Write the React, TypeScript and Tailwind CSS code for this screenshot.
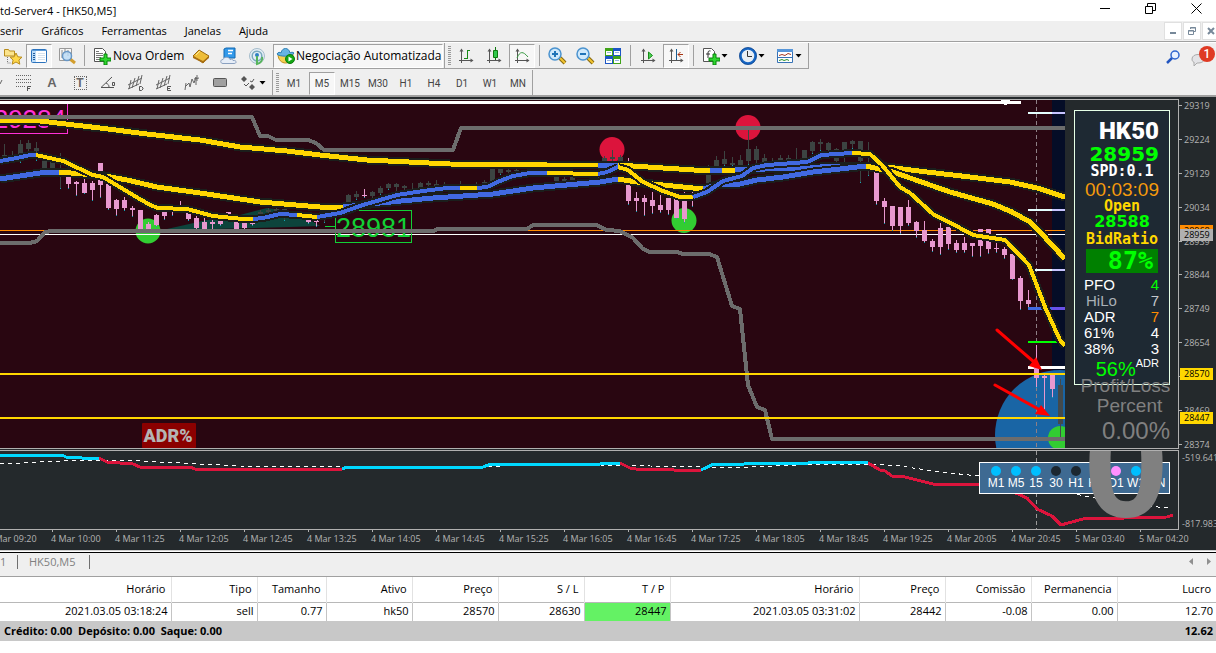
import * as React from "react";

type Candle = [x: number, high: number, low: number, top: number, bottom: number];

type Segment = { color: string; points: string };

const GOLD = "#ffd700";
const BLUE = "#4169e1";
const CYAN = "#00d8ff";
const RED = "#dc143c";

const darkCandles: Candle[] = [
  [4, 144, 157, 155, 157], [12, 151, 157, 155, 156], [20, 140, 162, 144, 155],
  [28, 140, 152, 143, 149], [36, 142, 160, 148, 152], [44, 159, 168, 159, 168],
  [52, 161, 168, 161, 168], [60, 153, 188, 160, 163], [260, 210, 217, 212, 215],
  [268, 208, 213, 210, 212], [276, 208, 213, 209, 211], [284, 208, 220, 209, 212],
  [324, 212, 222, 212, 214], [348, 194, 203, 195, 203], [356, 191, 199, 194, 197],
  [372, 191, 198, 192, 196], [380, 186, 194, 188, 193], [388, 183, 189, 184, 188],
  [396, 183, 192, 184, 187], [404, 185, 191, 186, 188], [412, 183, 192, 190, 191],
  [420, 182, 189, 183, 188], [428, 181, 187, 183, 185], [436, 180, 187, 184, 186],
  [444, 182, 187, 185, 186], [460, 181, 186, 185, 186], [476, 182, 186, 185, 186],
  [484, 180, 185, 182, 184], [492, 169, 182, 169, 182], [500, 169, 174, 169, 173],
  [508, 169, 173, 170, 172], [516, 169, 173, 170, 171], [532, 169, 171, 169, 171],
  [556, 176, 181, 176, 181], [564, 177, 181, 179, 181], [572, 177, 180, 177, 180],
  [596, 177, 179, 177, 179], [604, 156, 161, 158, 161], [612, 150, 161, 157, 159],
  [620, 155, 162, 157, 161], [708, 165, 183, 173, 183], [716, 156, 166, 160, 166],
  [724, 151, 165, 159, 164], [732, 157, 165, 163, 165], [740, 155, 165, 160, 165],
  [748, 130, 164, 149, 161], [756, 146, 164, 149, 160], [764, 154, 163, 158, 162],
  [772, 158, 163, 161, 162], [780, 155, 162, 158, 161], [788, 155, 161, 158, 161],
  [796, 148, 161, 159, 160], [804, 150, 160, 150, 160], [812, 141, 153, 142, 151],
  [820, 139, 150, 142, 144], [828, 142, 153, 143, 150], [836, 148, 163, 149, 161],
  [844, 142, 162, 142, 151], [852, 140, 148, 141, 144], [860, 141, 182, 141, 161],
  [868, 142, 175, 152, 153],
];

const pinkCandles: Candle[] = [
  [68, 166, 188, 177, 184], [76, 181, 195, 182, 184], [84, 178, 193, 183, 193],
  [92, 181, 200, 183, 190], [100, 163, 197, 163, 185], [108, 181, 209, 181, 208],
  [116, 199, 215, 200, 209], [124, 197, 210, 200, 208], [132, 206, 216, 208, 210],
  [140, 210, 229, 210, 229], [148, 222, 229, 224, 229], [156, 214, 226, 215, 225],
  [164, 210, 219, 211, 216], [172, 210, 215, 211, 212], [180, 201, 212, 210, 211],
  [188, 212, 220, 213, 219], [196, 215, 229, 218, 228], [204, 217, 229, 222, 229],
  [212, 219, 229, 222, 224], [220, 213, 225, 219, 224], [228, 212, 216, 212, 215],
  [236, 221, 229, 221, 229], [244, 222, 229, 223, 228], [252, 215, 225, 222, 224],
  [308, 219, 223, 220, 222], [316, 217, 226, 220, 222], [364, 189, 197, 195, 196],
  [628, 158, 204, 184, 201], [636, 192, 211, 198, 201], [644, 195, 215, 198, 202],
  [652, 192, 213, 200, 206], [660, 195, 212, 205, 210], [668, 198, 214, 198, 210],
  [676, 198, 218, 198, 218], [684, 192, 222, 200, 219], [692, 183, 206, 193, 194],
  [876, 172, 204, 172, 201], [884, 198, 223, 201, 207], [892, 206, 230, 206, 226],
  [900, 207, 233, 207, 226], [908, 200, 225, 207, 223], [916, 221, 237, 222, 231],
  [924, 221, 242, 230, 241], [932, 239, 251, 241, 247], [940, 223, 254, 228, 247],
  [948, 226, 249, 227, 244], [956, 240, 252, 243, 250], [964, 237, 252, 243, 250],
  [972, 243, 256, 243, 246], [980, 229, 256, 229, 246], [988, 229, 253, 229, 249],
  [996, 242, 252, 248, 249], [1004, 247, 258, 249, 255], [1012, 254, 279, 254, 279],
  [1020, 276, 309, 278, 301], [1028, 290, 307, 300, 304], [1036, 345, 387, 367, 378],
  [1044, 374, 409, 376, 378], [1052, 374, 397, 374, 389],
];

const slowAverage: Segment[] = [
  { color: GOLD, points: "0,120 40,121 100,128 147,134 200,140 240,147 287,151 320,155 367,160 450,164 547,165 598,165" },
  { color: BLUE, points: "598,165 618,165" },
  { color: GOLD, points: "618,165 663,168 710,171" },
  { color: BLUE, points: "710,171 722,170" },
  { color: GOLD, points: "722,170 735,170" },
  { color: BLUE, points: "735,170 765,169 810,168 830,166 866,166" },
  { color: GOLD, points: "866,166 887,167 927,172 970,177 1010,182 1037,188 1065,197" },
];

const midAverage: Segment[] = [
  { color: BLUE, points: "0,179 40,173 59,172" },
  { color: GOLD, points: "59,172 83,174 105,176 127,180 157,187 200,193 260,202 320,207 343,207" },
  { color: BLUE, points: "343,207 380,203 433,198 493,194 533,188 600,182 618,179" },
  { color: GOLD, points: "618,179 643,183 703,189" },
  { color: BLUE, points: "703,189 720,184 740,184 757,180 783,177 813,172 840,169 866,166" },
  { color: GOLD, points: "866,166 893,172 950,192 993,204 1012,212 1030,222 1040,232 1065,259" },
];

const fastAverage: Segment[] = [
  { color: BLUE, points: "0,161 17,158 30,155 36,155" },
  { color: GOLD, points: "36,155 63,161 93,175 103,177 133,195 150,205 158,208 187,209 213,216 243,219 253,219" },
  { color: BLUE, points: "253,219 263,218 280,214 297,215" },
  { color: GOLD, points: "297,215 317,217" },
  { color: BLUE, points: "317,217 340,213 363,205 397,195 423,191 447,188 460,188" },
  { color: GOLD, points: "460,188 477,188" },
  { color: BLUE, points: "477,188 487,187 500,181 513,176 530,173 547,173" },
  { color: GOLD, points: "547,173 598,174" },
  { color: BLUE, points: "598,174 607,172 618,167" },
  { color: GOLD, points: "618,167 628,170 643,182 663,191 680,197 693,197" },
  { color: BLUE, points: "693,197 707,192 723,181 742,176 753,168 767,165 807,162 822,155 852,153" },
  { color: GOLD, points: "852,153 870,154 882,165 900,187 910,193 933,214 960,228 973,235 1005,240 1029,265 1045,307 1060,340 1065,346" },
];

const oscillator: Segment[] = [
  { color: CYAN, points: "0,455 62,455 66,457 80,457 82,458 99,458" },
  { color: RED, points: "99,458 107,462 120,463 133,464 140,467 190,467 195,469 342,469" },
  { color: CYAN, points: "342,469 347,467 483,467 491,464 600,464 602,463 620,463" },
  { color: RED, points: "620,463 630,468 636,469 672,469 674,470 701,470" },
  { color: CYAN, points: "701,470 714,464 744,464 746,463 808,463 810,462 857,462 868,463" },
  { color: RED, points: "868,463 880,470 885,471 892,476 905,477 933,484 979,484 1010,491 1018,494 1027,498 1037,509 1052,516 1061,525 1083,519 1167,517 1173,515" },
];

const prices = ["29319", "29224", "29129", "29034", "28939", "28844", "28749", "28654", "28559", "28469", "28374"];

const times = [
  "4 Mar 09:20", "4 Mar 10:00", "4 Mar 11:25", "4 Mar 12:05", "4 Mar 12:45", "4 Mar 13:25", "4 Mar 14:05",
  "4 Mar 14:45", "4 Mar 15:25", "4 Mar 16:05", "4 Mar 16:45", "4 Mar 17:25", "4 Mar 18:05", "4 Mar 18:45",
  "4 Mar 19:25", "4 Mar 20:05", "4 Mar 20:45", "5 Mar 03:40", "5 Mar 04:20",
];

const trends = [
  { label: "M1", dot: "bg-[#00bfff]" },
  { label: "M5", dot: "bg-[#00bfff]" },
  { label: "15", dot: "bg-[#00bfff]" },
  { label: "30", dot: "bg-[#1c2730]" },
  { label: "H1", dot: "bg-[#1c2730]" },
  { label: "H4", dot: "bg-[#ff90ff]" },
  { label: "D1", dot: "bg-[#ff90ff]" },
  { label: "W1", dot: "bg-[#00bfff]" },
  { label: "MN", dot: "bg-[#00bfff]" },
];

const columns = [
  { title: "Horário", value: "2021.03.05 03:18:24", width: 171 },
  { title: "Tipo", value: "sell", width: 86 },
  { title: "Tamanho", value: "0.77", width: 69 },
  { title: "Ativo", value: "hk50", width: 86 },
  { title: "Preço", value: "28570", width: 86 },
  { title: "S / L", value: "28630", width: 86 },
  { title: "T / P", value: "28447", width: 86, hit: true },
  { title: "Horário", value: "2021.03.05 03:31:02", width: 189 },
  { title: "Preço", value: "28442", width: 86 },
  { title: "Comissão", value: "-0.08", width: 86 },
  { title: "Permanencia", value: "0.00", width: 86 },
  { title: "Lucro", value: "12.70", width: 99 },
];

function Icon({ size = 20, children }: { size?: number; children: React.ReactNode }) {
  return (
    <svg width={size} height={size} viewBox={`0 0 ${size} ${size}`} className="shrink-0" aria-hidden="true" fill="none">
      {children}
    </svg>
  );
}

function ToolButton({ label, pressed, children }: { label: string; pressed?: boolean; children: React.ReactNode }) {
  return (
    <button
      type="button"
      aria-label={label}
      className={
        pressed
          ? "flex h-[24px] w-[26px] mx-px shrink-0 items-center justify-center border border-[#a0a0a0] border-r-white border-b-white bg-[#f7f7f7]"
          : "flex h-[24px] w-7 shrink-0 items-center justify-center"
      }
    >
      {children}
    </button>
  );
}

function DropButton({ label, children }: { label: string; children: React.ReactNode }) {
  return (
    <button type="button" aria-label={label} className="flex h-[24px] w-[37px] shrink-0 items-center gap-px pl-[5px]">
      {children}
      <Caret />
    </button>
  );
}

function Caret() {
  return (
    <svg width="7" height="4" viewBox="0 0 7 4" className="shrink-0" aria-hidden="true">
      <path d="M.5 0h6L3.500 3.500z" fill="#000" />
    </svg>
  );
}

function Separator() {
  return <div className="mx-[3px] h-[21px] w-px shrink-0 bg-[#a0a0a0]" />;
}

function Grip() {
  return (
    <svg width="3" height="20" className="ml-[3px] mr-px shrink-0" aria-hidden="true">
      {[0, 2, 4, 6, 8, 10, 12, 14, 16, 18].map((y) => (
        <rect key={y} x="0" y={y} width="3" height="1" fill="#9a9a9a" />
      ))}
    </svg>
  );
}

// x/y axes shared by the chart type buttons
function Axes() {
  return (
    <>
      <path d="M5.500 4v13M3 14.500h13" stroke="#555" />
      <path d="M5.500 2.500l2 3h-4zM17.500 14.500l-3-2v4z" fill="#555" />
    </>
  );
}

function Magnifier({ plus }: { plus: boolean }) {
  return (
    <Icon>
      <path d="M13 12l5 5" stroke="#8a6a10" strokeWidth="4" />
      <path d="M13 12l5 5" stroke="#f2c531" strokeWidth="2" />
      <circle cx="8" cy="8" r="6" fill="#cfe9fb" stroke="#4b93cf" strokeWidth="1.500" />
      <path d={plus ? "M5 8h6M8 5v6" : "M5 8h6"} stroke="#1f74b8" strokeWidth="2" />
    </Icon>
  );
}

function NewDocument({ symbol }: { symbol?: boolean }) {
  return (
    <Icon size={18}>
      <path d="M1.500 1.500h8l3 3v10h-11z" fill="#fff" stroke="#555" />
      {symbol ? (
        <path d="M8.500 4c-2-.5-2.500.5-2.500 2v5M4 7h4" stroke="#333" />
      ) : (
        <path d="M3 4.500h3M3 6.500h7M3 8.500h7M3 10.500h5M3 12.500h4" stroke="#777" />
      )}
      <path d="M11 7h3v4h4v3h-4v4h-3v-4H7v-3h4z" fill="#2fd62f" stroke="#07830b" />
    </Icon>
  );
}

function Pitchfork({ mark }: { mark?: string }) {
  return (
    <Icon>
      <path d="M2 12L16 5M2 16l11-5M5 7L3 16M9 5L6 15M13 3l-3 10M16 2l-2 9" stroke="#666" />
      {mark === "D" && <path d="M13.500 13.500h2l1.500 1.500v1l-1.500 1.500h-2z" stroke="#555" />}
      {mark === "E" && <path d="M17 13.500h-3.500v4H17M13.500 15.500H16" stroke="#555" />}
    </Icon>
  );
}

function TitleBar() {
  return (
    <header className="flex h-[21px] items-center justify-between bg-white">
      <h1 className="text-[11px] leading-[20px]">td-Server4 - [HK50,M5]</h1>
      <div className="flex h-full items-start pt-[3px]">
        <button type="button" aria-label="Minimizar" className="flex w-[46px] justify-center">
          <svg width="11" height="11"><path d="M0 5.500h10" stroke="#000" /></svg>
        </button>
        <button type="button" aria-label="Restaurar" className="flex w-[45px] justify-center">
          <svg width="11" height="11" fill="none" stroke="#000">
            <path d="M.5 3.500h7v7h-7zM2.500 3V.5h8v7H8" />
          </svg>
        </button>
        <button type="button" aria-label="Fechar" className="flex w-[43px] justify-center pl-1">
          <svg width="11" height="11"><path d="M.5.5l10 10M10.500.5l-10 10" stroke="#000" /></svg>
        </button>
      </div>
    </header>
  );
}

function MenuBar() {
  const box = "flex h-[18px] w-[18px] shrink-0 items-center justify-center border border-[#e0e0e0] bg-white";
  return (
    <nav className="flex h-[21px] items-center justify-between overflow-hidden border-b border-[#a0a0a0]">
      <div className="flex gap-[18px] text-[11px] leading-[20px]">
        {["serir", "Gráficos", "Ferramentas", "Janelas", "Ajuda"].map((item) => (
          <button key={item} type="button">{item}</button>
        ))}
      </div>
      <div className="-mr-[4px] flex gap-px">
        <button type="button" aria-label="Minimizar gráfico" className={box}>
          <svg width="10" height="10"><path d="M2 7h6" stroke="#778899" strokeWidth="2" /></svg>
        </button>
        <button type="button" aria-label="Restaurar gráfico" className={box}>
          <svg width="10" height="10" fill="none" stroke="#778899">
            <path d="M1.500 4.500h5v4h-5zM1 5h6M3.500 3V1.500h5v4H7M3 2h6" />
          </svg>
        </button>
        <button type="button" aria-label="Fechar gráfico" className={box}>
          <svg width="10" height="10"><path d="M2 2l6 6M8 2L2 8" stroke="#778899" strokeWidth="2" /></svg>
        </button>
      </div>
    </nav>
  );
}

function StandardToolbar() {
  return (
    <div className="flex h-7 justify-between overflow-hidden border-t border-white">
      <div className="flex h-[26px] border-b border-[#a0a0a0]">
        <div className="flex items-center border-r border-[#a0a0a0]">
          <button type="button" aria-label="Navegador" className="flex w-[25px] justify-center">
            <Icon>
              <path d="M1.500 3.500h4l1 1.500h5v5h-10z" fill="#fbe48d" stroke="#b98d1c" />
              <path d="M4.500 11v6h3" stroke="#777" strokeDasharray="1 1" />
              <path d="M13 7l1.800 3.800 4.200.4-3.100 2.800.9 4.200-3.800-2.200-3.800 2.200.9-4.200L7 11.200l4.200-.4z" fill="#ffd84a" stroke="#b98d1c" />
            </Icon>
          </button>
          <ToolButton label="Terminal" pressed>
            <Icon size={18}>
              <rect x="1.500" y="2.500" width="15" height="13" rx="1" fill="#fff" stroke="#2c73bd" />
              <path d="M2 3h14v1H2z" fill="#5d9bd8" />
              <path d="M2 4h4v11H2z" fill="#bcdcf8" />
              <path d="M3 6.500h2M3 8.500h2M3 10.500h2M3 12.500h2" stroke="#235c9c" />
              <path d="M8 6.500h7M8 8.500h7M8 10.500h7M8 12.500h7" stroke="#d5e2ee" />
            </Icon>
          </ToolButton>
          <ToolButton label="Testador de estratégia">
            <Icon>
              <path d="M2.500 2.500h12v12h-12z" fill="#f7f7f7" stroke="#999" />
              <path d="M5 4v8M8 3v5M11 4v6" stroke="#8b8b8b" />
              <path d="M13 13l5 4" stroke="#d39e2d" strokeWidth="3" />
              <circle cx="10" cy="10" r="4.500" fill="#b9d9f5" fillOpacity=".8" stroke="#6796c5" strokeWidth="1.500" />
            </Icon>
          </ToolButton>
          <Separator />
          <button type="button" className="flex w-[99px] items-center gap-[2px] whitespace-nowrap pl-[5px] text-[12px] leading-[20px]">
            <NewDocument />
            <span>Nova Ordem</span>
          </button>
          <ToolButton label="MetaEditor">
            <Icon>
              <path d="M2 10l6-6 10 6-6 7z" fill="#eebd39" stroke="#9a680d" />
              <path d="M2 10l10 5 6-5v2l-6 5-10-5z" fill="#a96f13" />
              <path d="M5 9l4-4" stroke="#ffe88f" />
            </Icon>
          </ToolButton>
          <ToolButton label="MetaQuotes">
            <Icon>
              <path d="M5 3l2-1h9v10H5z" fill="#3299ea" stroke="#1269b0" />
              <path d="M9 4.500h5M9 7.500h4" stroke="#fff" strokeWidth="1.500" />
              <path d="M4 17.500c-3 0-3-4 0-4 1-3 6-3 7 0 2-1 3 0 3 1 4-.5 4 3 1 3z" fill="#e6edf7" stroke="#8ba1c0" />
            </Icon>
          </ToolButton>
          <ToolButton label="Sinais">
            <Icon>
              <circle cx="10" cy="10" r="7.500" fill="#e4eef5" stroke="#a5bccb" />
              <circle cx="10" cy="10" r="4.800" stroke="#7aa9bd" strokeWidth="1.500" />
              <circle cx="10" cy="9" r="2" fill="#2f80c4" />
              <path d="M10 10v8c4-1 6-4 5-7" stroke="#57b45c" strokeWidth="2" />
            </Icon>
          </ToolButton>
          <button
            type="button"
            className="ml-[2px] mr-px flex h-[24px] w-[170px] items-center whitespace-nowrap border border-[#a0a0a0] border-r-white border-b-white bg-[#f7f7f7] pl-[2px] text-[12px] leading-[20px]"
          >
            <Icon>
              <path d="M2 8c0 12 15 12 15 0z" fill="#f6d052" stroke="#bb8c18" />
              <path d="M1 8c2 3 15 3 17-1-1-1-3-1-4 0-1-6-8-6-9 0-1-1-3-1-4 1z" fill="#67b4e4" stroke="#2e7fb4" />
              <circle cx="14" cy="13" r="4.500" fill="#14a614" stroke="#0b7b0b" />
              <path d="M12.500 10.500v5l4-2.500z" fill="#fff" />
            </Icon>
            <span>Negociação Automatizada</span>
          </button>
        </div>
        <div className="flex items-center border-r border-[#a0a0a0]">
          <Grip />
          <ToolButton label="Gráfico de barras">
            <Icon>
              <Axes />
              <path d="M11.500 4v9M11 4.500h3M8 12.500h3" stroke="#178b17" />
            </Icon>
          </ToolButton>
          <ToolButton label="Candlesticks">
            <Icon>
              <Axes />
              <path d="M11.500 1v13" stroke="#0d790d" />
              <path d="M9.500 4.500h4v7h-4z" fill="#2fc84a" stroke="#0d790d" />
            </Icon>
          </ToolButton>
          <ToolButton label="Gráfico de linha" pressed>
            <Icon>
              <Axes />
              <path d="M5 12c3-7 6-7 11-1" stroke="#3a9a43" />
            </Icon>
          </ToolButton>
          <Separator />
          <ToolButton label="Aproximar"><Magnifier plus /></ToolButton>
          <ToolButton label="Afastar"><Magnifier plus={false} /></ToolButton>
          <ToolButton label="Lado a lado">
            <Icon>
              <path d="M2 2h8v8H2z" fill="#40a318" />
              <path d="M10 2h8v8h-8z" fill="#1c55c5" />
              <path d="M2 10h8v8H2z" fill="#1c55c5" />
              <path d="M10 10h8v8h-8z" fill="#40a318" />
              <path d="M3 5h6v4H3zM11 5h6v4h-6zM3 13h6v4H3zM11 13h6v4h-6z" fill="#fff" />
              <path d="M4 6.500h4M12 6.500h4M4 14.500h4M12 14.500h4" stroke="#9ab6dd" />
            </Icon>
          </ToolButton>
          <Separator />
          <ToolButton label="Rolagem automática">
            <Icon>
              <Axes />
              <path d="M10.500 6v7l4-3.500z" fill="#4bd055" stroke="#178b17" />
            </Icon>
          </ToolButton>
          <ToolButton label="Deslocar gráfico" pressed>
            <Icon>
              <Axes />
              <path d="M10.500 3v11" stroke="#1a5e94" />
              <path d="M12 8.500h5M14.500 6L12 8.500l2.500 2.500" stroke="#a63210" />
            </Icon>
          </ToolButton>
          <Separator />
          <DropButton label="Indicadores"><NewDocument symbol /></DropButton>
          <DropButton label="Períodos">
            <Icon size={18}>
              <circle cx="9" cy="9" r="7.500" fill="#e9eff5" stroke="#1766c4" strokeWidth="2.500" />
              <circle cx="9" cy="9" r="8.500" stroke="#0c3f85" strokeWidth=".7" />
              <path d="M8.500 4v5.500H13" stroke="#333" />
            </Icon>
          </DropButton>
          <DropButton label="Modelos">
            <Icon size={18}>
              <path d="M1.500 2.500h15v13h-15z" fill="#fff" stroke="#3772b5" />
              <path d="M1 2h16v3H1z" fill="#5796d9" />
              <path d="M1 10.500h16" stroke="#3772b5" />
              <path d="M3 8.500l3-1 3 1 3-2 3 1" stroke="#a33a24" />
              <path d="M3 13.500l3-1 2 1 3-1 2 1" stroke="#2b942b" />
            </Icon>
          </DropButton>
        </div>
      </div>
      <div className="flex gap-[9px]">
        <button type="button" aria-label="Pesquisar">
          <Icon size={16}>
            <path d="M2 14l6-6" stroke="#2356c0" strokeWidth="2.500" />
            <circle cx="10" cy="6" r="4" fill="#e8f0ff" stroke="#2f64cf" strokeWidth="1.500" />
          </Icon>
        </button>
        <button type="button" aria-label="Mensagens" className="relative h-[26px] w-[26px]">
          <Icon size={24}>
            <path d="M2 15c0-6 12-6 12 0 0 4-5 4-7 4l-3 3v-4c-1 0-2-1-2-3z" fill="#e3e3e6" stroke="#aaa" />
          </Icon>
          <span className="absolute right-[1px] top-[3px] h-4 w-4 rounded-full bg-[#df3a24] text-center font-['Roboto',sans-serif] text-[12px] font-medium leading-4 text-white">
            1
          </span>
        </button>
      </div>
    </div>
  );
}

function DrawingToolbar() {
  const frames = ["M1", "M5", "M15", "M30", "H1", "H4", "D1", "W1", "MN"];
  return (
    <div className="flex h-[25px] overflow-hidden">
      <div className="flex items-center border-r border-[#a0a0a0] pt-px">
        <svg width="10" height="20" className="shrink-0" aria-hidden="true">
          <path d="M0 11l2-4" stroke="#666" />
        </svg>
        <ToolButton label="Fibonacci">
          <Icon>
            <path d="M2 2.500h15M2 6.500h15M2 9.500h15M2 13.500h9" stroke="#666" strokeDasharray="1 1" />
            <path d="M13.500 18v-4.500H17M13.500 15.500H16" stroke="#555" />
          </Icon>
        </ToolButton>
        <button type="button" className="h-[24px] w-7 font-['Liberation_Sans',sans-serif] text-[13px] font-bold text-[#666]">A</button>
        <button type="button" className="flex h-[24px] w-7 items-center justify-center">
          <span className="h-[14px] w-[13px] border border-dotted border-[#666] text-center font-['Liberation_Sans',sans-serif] text-[12px] font-bold leading-[13px] text-[#666]">
            T
          </span>
        </button>
        <ToolButton label="Ângulo">
          <Icon>
            <path d="M3 14.500h13M3 14.500L14 4M8 10c2 1 3 2 3 4" stroke="#555" />
            <path d="M14.500 9.500h2v3h-2z" stroke="#555" />
          </Icon>
        </ToolButton>
        <ToolButton label="Canal D"><Pitchfork mark="D" /></ToolButton>
        <ToolButton label="Canal E"><Pitchfork mark="E" /></ToolButton>
        <ToolButton label="Ciclos">
          <Icon>
            <path d="M4 10l-1 7M4 13l3-3 1 4 2-8 2 4 2-6v8M12 6l5-1M15 2v6" stroke="#666" />
          </Icon>
        </ToolButton>
        <ToolButton label="Retângulo">
          <Icon>
            <rect x="3.500" y="5.500" width="13" height="8" rx="1" fill="#a0a0a0" stroke="#555" />
          </Icon>
        </ToolButton>
        <button type="button" aria-label="Setas" className="flex h-[24px] w-[38px] items-center pl-[5px]">
          <Icon>
            <path d="M2 6l3-3 3 3-3 3zM10 14l3-3 3 3-3 3z" fill="#555" />
            <path d="M5 11l2 2 3-3M11 8l2 1 2-3" stroke="#555" />
          </Icon>
          <Caret />
        </button>
      </div>
      <div className="flex items-center border-r border-[#a0a0a0] pt-px">
        <Grip />
        {frames.map((f) => (
          <button
            key={f}
            type="button"
            className={
              f === "M5"
                ? "mx-px h-[23px] w-[26px] border border-[#a0a0a0] border-r-white border-b-white bg-[#f7f7f7] text-center font-['Roboto',sans-serif] text-[10px] text-[#444]"
                : "h-[23px] w-7 text-center font-['Roboto',sans-serif] text-[10px] text-[#444]"
            }
          >
            {f}
          </button>
        ))}
      </div>
    </div>
  );
}

function Candles({ items, color }: { items: Candle[]; color: string }) {
  return (
    <g shapeRendering="crispEdges">
      {items.map(([x, high, low, top, bottom]) => (
        <g key={x}>
          <rect x={x} y={high} width="1" height={low - high} fill={color} />
          <rect x={x - 2} y={top} width="5" height={Math.max(1, bottom - top)} fill={color} />
          <rect x={x} y={low} width="1" height="1" fill="#12a5b5" />
        </g>
      ))}
    </g>
  );
}

function Average({ segments, width }: { segments: Segment[]; width: number }) {
  return (
    <g fill="none" strokeLinejoin="round" shapeRendering="crispEdges">
      {segments.map((s) => (
        <polyline key={`o${s.points}`} points={s.points} stroke="#1b1e1c" strokeWidth={width + 4} />
      ))}
      {segments.map((s) => (
        <polyline key={s.points} points={s.points} stroke={s.color} strokeWidth={width} />
      ))}
    </g>
  );
}

function PriceChart() {
  return (
    <svg
      viewBox="0 100 1065 348"
      preserveAspectRatio="xMaxYMin slice"
      className="h-[348px] min-w-0 flex-1 font-['Liberation_Sans',sans-serif]"
      role="img"
      aria-label="HK50 M5"
    >
      <rect x="0" y="100" width="1052" height="348" fill="#290611" />
      <rect x="1052" y="100" width="13" height="348" fill="#050d27" />
      <circle cx="1060" cy="435" r="65" fill="#1965a5" />
      <circle cx="1060" cy="438" r="12" fill="#32cd32" />
      <path d="M167 229l40-9 33-5 27-7 16 2 27 10 10 6-30 1-77 2z" fill="#0d443c" />
      <circle cx="148" cy="231" r="12.500" fill="#32cd32" />
      <circle cx="612" cy="149.500" r="12.500" fill={RED} />
      <circle cx="748" cy="127.500" r="12.500" fill={RED} />
      <circle cx="684" cy="220.500" r="12.500" fill="#32cd32" />

      <g fill="none" shapeRendering="crispEdges">
        <path d="M0 102.500h1021" stroke="#fff" strokeWidth="3" />
        <path d="M1001 100.500h9M1004 104.500h3" stroke="#fff" />
        <path d="M0 230.500h1065" stroke="#ff8c00" />
        <path d="M0 234.500h1065" stroke="#fff" />
        <path d="M1036.500 100v348" stroke="#8e7f86" strokeDasharray="4 3" />
        <path d="M1028 113h24M1028 210h24M1034 270h18" stroke="#e4ffff" strokeWidth="2" />
        <path d="M1052 113h13M1052 210h13M1052 270h13" stroke="#c8c4ff" strokeWidth="2" />
        <path d="M1028 308.500h24" stroke={BLUE} strokeWidth="3" />
        <path d="M1052 308.500h13" stroke="#6a50e8" strokeWidth="3" />
        <path d="M1028 342h30" stroke="#00ff00" strokeWidth="2" />
        <path d="M1028 367.500h37" stroke="#fff" strokeWidth="3" />
      </g>

      <text x="66" y="128" textAnchor="end" fontSize="26" fill="#ff30d8">29284</text>
      <path d="M0 133.500h67.500V104" fill="none" stroke="#ff30d8" shapeRendering="crispEdges" />
      <text x="336" y="237" fontSize="27" fill="#12d035">28981</text>
      <path d="M325 226.500h10M335.500 210.500h76v32h-76z" fill="none" stroke="#12d035" shapeRendering="crispEdges" />

      <Candles items={darkCandles} color="#3c4442" />
      <Candles items={pinkCandles} color="#e898cf" />
      <Candles items={[[1060, 379, 437, 385, 424]]} color="#444a4c" />

      <Average segments={slowAverage} width={5} />
      <Average segments={midAverage} width={5} />
      <Average segments={fastAverage} width={4} />

      <g fill="none" stroke="#6c6c6c" strokeWidth="4" strokeLinejoin="round" shapeRendering="crispEdges">
        <polyline points="0,117 252,117 260,136 268,136 276,140 308,140 316,143 324,150 453,150 461,128 1065,128" />
        <polyline points="0,243 30,243 37,241 45,232 52,231 433,231 438,229 527,229 533,225 596,225 607,230 620,231 633,238 643,249 650,252 677,252 683,254 709,254 717,257 724,280 732,306 740,309 748,385 757,407 765,410 772,439 1065,439" />
      </g>
      <path d="M0 374h1065M0 418h1065" stroke={GOLD} strokeWidth="2" shapeRendering="crispEdges" />

      <g stroke="#f00" strokeWidth="3" strokeLinecap="round" fill="#f00">
        <path d="M997 330l37 32M995 385l45 25" />
        <path d="M1042 370l-13-4 7-9zM1050 416l-15-2 6-9z" stroke="none" />
      </g>

      <rect x="142" y="423" width="54" height="25" rx="1" fill="#8b0000" />
      <text x="168" y="442" textAnchor="middle" fontSize="18" fontWeight="900" fill="#b4b4b4" className="font-['Roboto',sans-serif]">
        ADR%
      </text>
    </svg>
  );
}

function InfoRow({ label, value, tone = "text-white", valueTone = "text-white" }: {
  label: string;
  value: string;
  tone?: string;
  valueTone?: string;
}) {
  return (
    <div className="flex h-4 justify-between pl-[9px] pr-[10px] text-[15px] leading-4">
      <span className={tone}>{label}</span>
      <span className={valueTone}>{value}</span>
    </div>
  );
}

function InfoPanel() {
  return (
    <aside className="w-[113px] shrink-0 whitespace-nowrap pl-[9px] pt-[10px] font-['Liberation_Sans',sans-serif]">
      <div className="h-[275px] w-[96px] border border-[#e6ffe6] bg-[#1e2933] pt-[6px] text-center">
        <div className="pr-[10px] text-right font-['Roboto',sans-serif] text-[24px] font-black leading-[28px] text-white">
          HK50
        </div>
        <div className="pr-[10px] text-right font-['DejaVu_Sans',sans-serif] text-[20px] font-bold leading-[18px] text-[#00ff00]">28959</div>
        <div className="font-['DejaVu_Sans_Mono',monospace] text-[15px] font-bold leading-[17px] text-white">SPD:0.1</div>
        <div className="text-[19px] leading-[19px] text-[#f59a0c]">00:03:09</div>
        <div className="font-['DejaVu_Sans_Mono',monospace] text-[15px] font-bold leading-[15px] text-[#ffd700]">Open</div>
        <div className="font-['DejaVu_Sans',sans-serif] text-[16px] font-bold leading-[15px] text-[#00ff00]">28588</div>
        <div className="font-['DejaVu_Sans_Mono',monospace] text-[15px] font-bold leading-[20px] text-[#ffd700]">BidRatio</div>
        <div className="mx-[11px] h-6 bg-[#008000] pr-[5px] text-right font-['DejaVu_Sans_Mono',monospace] text-[25px] font-bold leading-6 text-[#00ff00]">
          87%
        </div>
        <div className="pt-1">
          <InfoRow label="PFO" value="4" valueTone="text-[#00ff00]" />
          <InfoRow label="HiLo" value="7" tone="pl-[2px] text-[#a9b0b5]" valueTone="text-[#c4c8cc]" />
          <InfoRow label="ADR" value="7" valueTone="text-[#ff8c00]" />
          <InfoRow label="61%" value="4" />
          <InfoRow label="38%" value="3" />
        </div>
        <div className="flex justify-end pr-[10px]">
          <span className="text-[20px] leading-6 text-[#00ff00]">56%</span>
          <span className="text-[11px] leading-[12px] text-white">ADR</span>
        </div>
      </div>
      <div className="-mt-[9px] pr-px text-center text-[19px] leading-[20px] text-[#808080]">
        <div>Profit/Loss</div>
        <div className="pl-2">Percent</div>
      </div>
      <div className="pr-2 pt-px text-right text-[24px] leading-[28px] text-[#808080]">0.00%</div>
    </aside>
  );
}

function TrendPane() {
  return (
    <div className="relative h-20 overflow-hidden border-y border-r border-[#b0b0b0]">
      <svg viewBox="0 451 1178 78" preserveAspectRatio="xMaxYMin slice" className="h-[78px] w-full" role="img" aria-label="Tendência">
        <g fill="none" shapeRendering="crispEdges">
          <path d="M1036.500 451v78" stroke="#9a9a9a" strokeDasharray="4 3" />
          <polyline
            points="0,464 20,463 60,461 100,460 140,461 180,463 240,466 340,467 450,467 500,466 600,465 650,466 700,467 750,467 800,465 870,464 900,466 940,472 979,476 1080,495 1100,499 1130,505 1172,508"
            stroke="#fff"
            strokeDasharray="4 4"
          />
          {oscillator.map((s) => (
            <polyline key={s.points} points={s.points} stroke={s.color} strokeWidth="3" strokeLinejoin="round" />
          ))}
        </g>
      </svg>
      <div className="absolute right-[8px] top-[11px] flex h-8 w-[191px] border border-white bg-[#3e6a92] pl-[6px] font-['Liberation_Sans',sans-serif] text-[12px] text-white">
        {trends.map((t) => (
          <div key={t.label} className="flex w-5 shrink-0 flex-col items-center pt-[3px]">
            <span className={`h-[10px] w-[10px] rounded-full ${t.dot}`} />
            <span className="leading-[14px]">{t.label}</span>
          </div>
        ))}
      </div>
      <div className="absolute -top-[64px] right-[9px] font-['Liberation_Sans',sans-serif] text-[154px] font-bold leading-[154px] text-[#808080]">
        0
      </div>
    </div>
  );
}

function PriceScale() {
  const tag = "absolute left-[1px] h-3 w-[33px] pl-1 leading-3 text-black";
  return (
    <div className="flex w-[37px] shrink-0 flex-col overflow-hidden text-[9px] leading-[13px] text-[#b4b4b4]">
      <div className="relative flex h-[352px] flex-col justify-between">
        {prices.map((p) => (
          <div key={p} className="flex items-center gap-[2px]">
            <span className="h-px w-[3px] bg-[#b0b0b0]" />
            <span>{p}</span>
          </div>
        ))}
        <span className={`${tag} top-[126px] bg-[#ff8c00]`}>28968</span>
        <span className={`${tag} top-[130px] bg-[#b0b0b0]`}>28959</span>
        <span className={`${tag} top-[269px] bg-[#ffd700]`}>28570</span>
        <span className={`${tag} top-[313px] bg-[#ffd700]`}>28447</span>
      </div>
      <div className="flex flex-1 flex-col justify-between whitespace-nowrap pl-[3px]">
        <span>-519.641</span>
        <span>-817.983</span>
      </div>
    </div>
  );
}

function ChartWindow() {
  return (
    <main className="overflow-hidden border-t-2 border-[#a0a0a0] bg-[#24292c] pt-[2px]">
      <div className="flex">
        <div className="min-w-0 flex-1">
          <div className="flex h-[350px] border-y border-r border-[#b0b0b0]">
            <PriceChart />
            <InfoPanel />
          </div>
          <div className="mt-px">
            <TrendPane />
          </div>
        </div>
        <PriceScale />
      </div>
      <div className="-ml-[13px] flex h-5 text-[9px] leading-[13px] text-[#b4b4b4]">
        {times.map((t) => (
          <div key={t} className="w-16 shrink-0 whitespace-nowrap">
            <div className="ml-px h-[2px] w-px bg-[#b0b0b0]" />
            {t}
          </div>
        ))}
      </div>
      <div className="h-[3px] border-b border-t border-b-black border-t-[#d0d0d0] bg-white" />
    </main>
  );
}

function ChartTabs() {
  return (
    <div className="flex h-6 justify-between border-b border-[#a0a0a0] text-[11px] leading-[18px] text-[#808080]">
      <div className="flex h-[18px]">
        <button type="button" className="w-[17px] text-left">1</button>
        <button type="button" className="my-[2px] flex items-center border-x border-[#707070] pl-[11px] pr-[14px]">HK50,M5</button>
      </div>
      <div className="flex h-4 items-center gap-[14px] pr-[5px]">
        <button type="button" aria-label="Anterior">
          <svg width="4" height="7" className="block"><path d="M4 0v7L0 3.500z" fill="#909090" /></svg>
        </button>
        <button type="button" aria-label="Próximo">
          <svg width="4" height="7" className="block"><path d="M0 0v7l4-3.500z" fill="#909090" /></svg>
        </button>
      </div>
    </div>
  );
}

function TradeTable() {
  return (
    <table className="w-full table-fixed border-collapse bg-white text-right text-[11px] text-black">
      <colgroup>
        {columns.map((c, i) => (
          <col key={i} style={{ width: c.width }} />
        ))}
      </colgroup>
      <thead>
        <tr className="h-[25px] border-b border-[#b8b8b8]">
          {columns.map((c, i) => (
            <th key={i} scope="col" className="border-r border-[#e2e2e2] p-0 pr-[5px] font-normal leading-[20px] last:border-r-0">
              {c.title}
            </th>
          ))}
        </tr>
      </thead>
      <tbody>
        <tr className="h-[19px] align-top">
          {columns.map((c, i) => (
            <td
              key={i}
              className={
                c.hit
                  ? "border-r border-[#c4c4c4] bg-[#64f264] p-0 pr-[3px] leading-[16px]"
                  : "border-r border-[#c4c4c4] p-0 pr-[3px] leading-[16px] last:border-r-0"
              }
            >
              {c.value}
            </td>
          ))}
        </tr>
      </tbody>
      <tfoot>
        <tr className="h-5 bg-[#c8c8c8] font-bold">
          <td colSpan={11} className="whitespace-pre p-0 pl-1 text-left leading-[20px]">
            {"Crédito: 0.00  Depósito: 0.00  Saque: 0.00"}
          </td>
          <td className="p-0 pr-[3px] leading-[20px]">12.62</td>
        </tr>
      </tfoot>
    </table>
  );
}

export default function App() {
  return (
    <div className="min-h-screen overflow-hidden bg-white font-['Open_Sans','Noto_Sans',sans-serif] text-black">
      <TitleBar />
      <div className="bg-[#efefef]">
        <MenuBar />
        <StandardToolbar />
        <DrawingToolbar />
      </div>
      <ChartWindow />
      <div className="bg-[#efefef]">
        <ChartTabs />
      </div>
      <TradeTable />
    </div>
  );
}
